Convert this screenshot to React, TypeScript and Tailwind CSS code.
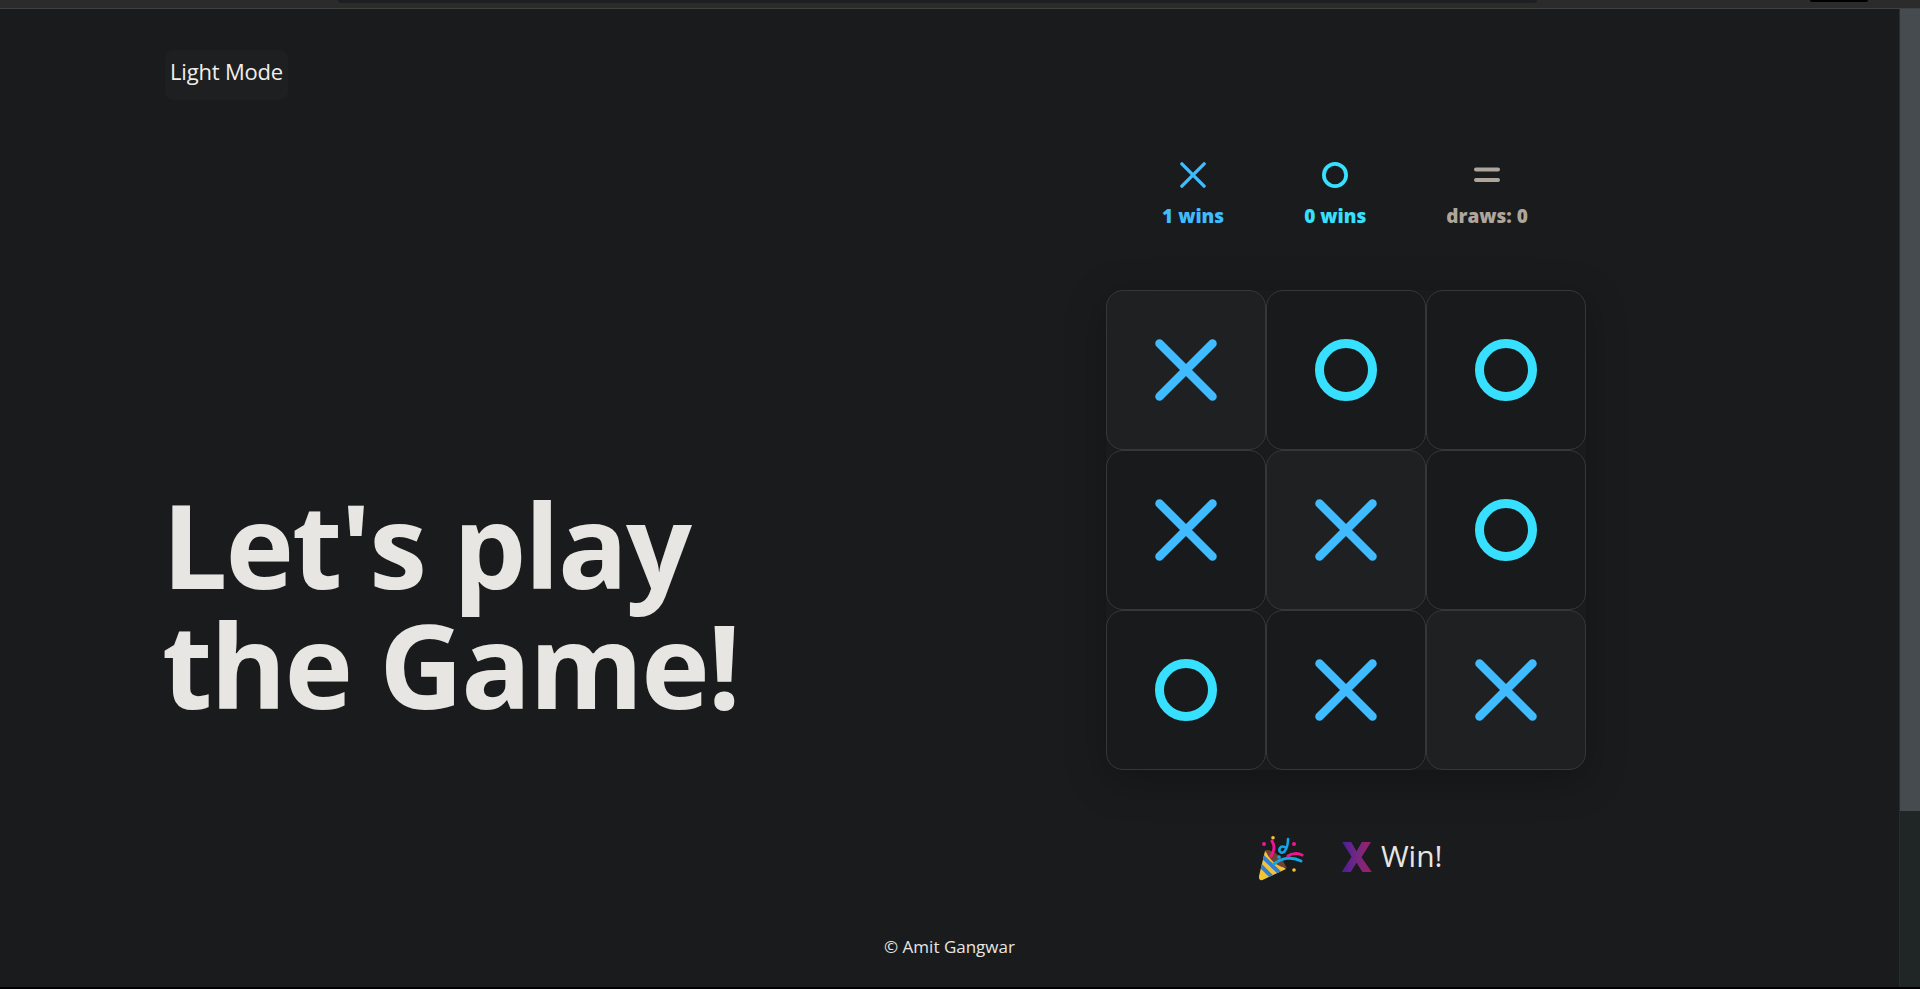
import React from 'react';

type Mark = 'x' | 'o';

const board: { mark: Mark; win?: boolean }[] = [
  { mark: 'x', win: true },
  { mark: 'o' },
  { mark: 'o' },
  { mark: 'x' },
  { mark: 'x', win: true },
  { mark: 'o' },
  { mark: 'o' },
  { mark: 'x' },
  { mark: 'x', win: true },
];

const CrossIcon = ({ size, stroke }: { size: number; stroke: number }) => (
  <svg width={size} height={size} viewBox="0 0 62 62" fill="none" stroke="#40bbff" strokeLinecap="round">
    <path d="M4.5 4.5 57.5 57.5M57.5 4.5 4.5 57.5" strokeWidth={stroke} />
  </svg>
);

const CircleIcon = ({ size, stroke }: { size: number; stroke: number }) => (
  <svg width={size} height={size} viewBox="0 0 62 62" fill="none" stroke="#37e0ff">
    <circle cx="31" cy="31" r={31 - stroke / 2} strokeWidth={stroke} />
  </svg>
);

const EqualsIcon = () => (
  <svg width="26" height="26" viewBox="0 0 26 26" fill="none" stroke="#aea69c" strokeWidth="4" strokeLinecap="round">
    <path d="M2 7.5h22M2 18h22" />
  </svg>
);

const PartyPopper = () => (
  <svg width="46" height="46" viewBox="0 0 46 46" fill="none">
    <defs>
      <clipPath id="cone">
        <path d="M7 15 28 33 4.5 44Q.5 45 1 40Z" />
      </clipPath>
    </defs>
    <path d="M7 15 28 33 4.5 44Q.5 45 1 40Z" fill="#f6c333" />
    <g clipPath="url(#cone)" stroke="#2f7fd8" strokeWidth="4">
      <path d="M4 20 25 40M2 29 15 42" />
    </g>
    <path d="M7 14Q20 13 29 32 14 30 7 14Z" fill="#6b4433" />
    <path d="M14 5c3 5 2 11-1 15" stroke="#f0158c" strokeWidth="3" strokeLinecap="round" />
    <path d="M16 28c7-6 18-8 27-3" stroke="#10a8e8" strokeWidth="3" strokeLinecap="round" />
    <path d="M30 20c4-3 10-3 14-1" stroke="#f0158c" strokeWidth="3" strokeLinecap="round" />
    <path d="M30 3c0 5-1 10-4 13-3 2-6-1-4-4 1-2 4-2 6 0" stroke="#10a8e8" strokeWidth="2.5" strokeLinecap="round" />
    <circle cx="6" cy="8" r="2" fill="#f0158c" />
    <circle cx="15" cy="1.8" r="1.8" fill="#f6c333" />
    <circle cx="36" cy="8" r="2" fill="#f0158c" />
    <circle cx="21" cy="21" r="1.8" fill="#10a8e8" />
    <circle cx="36" cy="34" r="1.8" fill="#f6c333" />
  </svg>
);

export default function App() {
  return (
    <div className="h-[989px] flex flex-col bg-black overflow-hidden font-['Open_Sans','Noto_Sans',sans-serif]">
      <div className="h-[9px] shrink-0 bg-[#2b2b2b] border-b border-[#404040] flex pl-[338px]">
        <div className="w-[1199px] h-[3px] bg-[#1d1f22] rounded-b" />
        <div className="ml-[273px] w-[58px] h-[2px] bg-black rounded-b" />
      </div>

      <div className="h-[978px] flex">
        <div className="flex-1 bg-[#191b1d] flex flex-col">
          <div className="flex-1 flex">
            <div className="flex-1 pl-[165px] pt-[41px] flex flex-col">
              <button className="w-[123px] h-[50px] pb-[7px] bg-[#1d1f21] rounded-lg text-[22px] text-[#f0eeeb] tracking-[-0.2px]">
                Light Mode
              </button>
              <h1 className="mt-[384px] -ml-[3px] text-[116px] leading-[120px] font-bold tracking-[-2px] text-[#e8e6e3]">
                Let's play
                <br />
                the Game!
              </h1>
            </div>

            <div className="w-[640px] mr-[233px] flex flex-col items-center">
              <div className="mt-[153px] -ml-[2px] flex gap-20 text-[19px] leading-6 font-extrabold">
                <div className="flex flex-col items-center gap-4 text-[#40bbff]">
                  <CrossIcon size={26} stroke={8} />
                  <span>1 wins</span>
                </div>
                <div className="flex flex-col items-center gap-4 text-[#37e0ff]">
                  <CircleIcon size={26} stroke={9} />
                  <span>0 wins</span>
                </div>
                <div className="flex flex-col items-center gap-4 text-[#aea69c]">
                  <EqualsIcon />
                  <span>draws: 0</span>
                </div>
              </div>

              <div className="mt-[62px] grid grid-cols-3 shadow-[0_10px_40px_rgba(0,0,0,0.25)] rounded-2xl">
                {board.map((cell, i) => (
                  <div
                    key={i}
                    className={`w-[160px] h-[160px] flex items-center justify-center rounded-[17px] border border-[#363739] ${
                      cell.win ? 'bg-[#1f2022]' : 'bg-[#191a1c]'
                    }`}
                  >
                    {cell.mark === 'x' ? <CrossIcon size={62} stroke={8.5} /> : <CircleIcon size={62} stroke={9} />}
                  </div>
                ))}
              </div>

              <div className="mt-[63px] flex items-center text-[30px] leading-[46px] text-[#e8e6e3]">
                <span className="ml-[8px] translate-y-[3px]">
                  <PartyPopper />
                </span>
                <span className="ml-[38px] text-[42px] font-extrabold bg-gradient-to-r from-[#4b1a98] to-[#a01a68] bg-clip-text text-transparent">
                  X
                </span>
                <span className="ml-[9px]">Win!</span>
              </div>
            </div>
          </div>

          <footer className="h-[55px] pt-[3px] text-center text-[17px] leading-6 text-[#e8e6e3]">© Amit Gangwar</footer>
        </div>

        <div className="w-[21px] flex flex-col bg-[#202526] border-l border-[#2a2c2e]">
          <div className="h-[802px] bg-[#454b4e]" />
        </div>
      </div>

      <div className="h-[2px] bg-black" />
    </div>
  );
}
